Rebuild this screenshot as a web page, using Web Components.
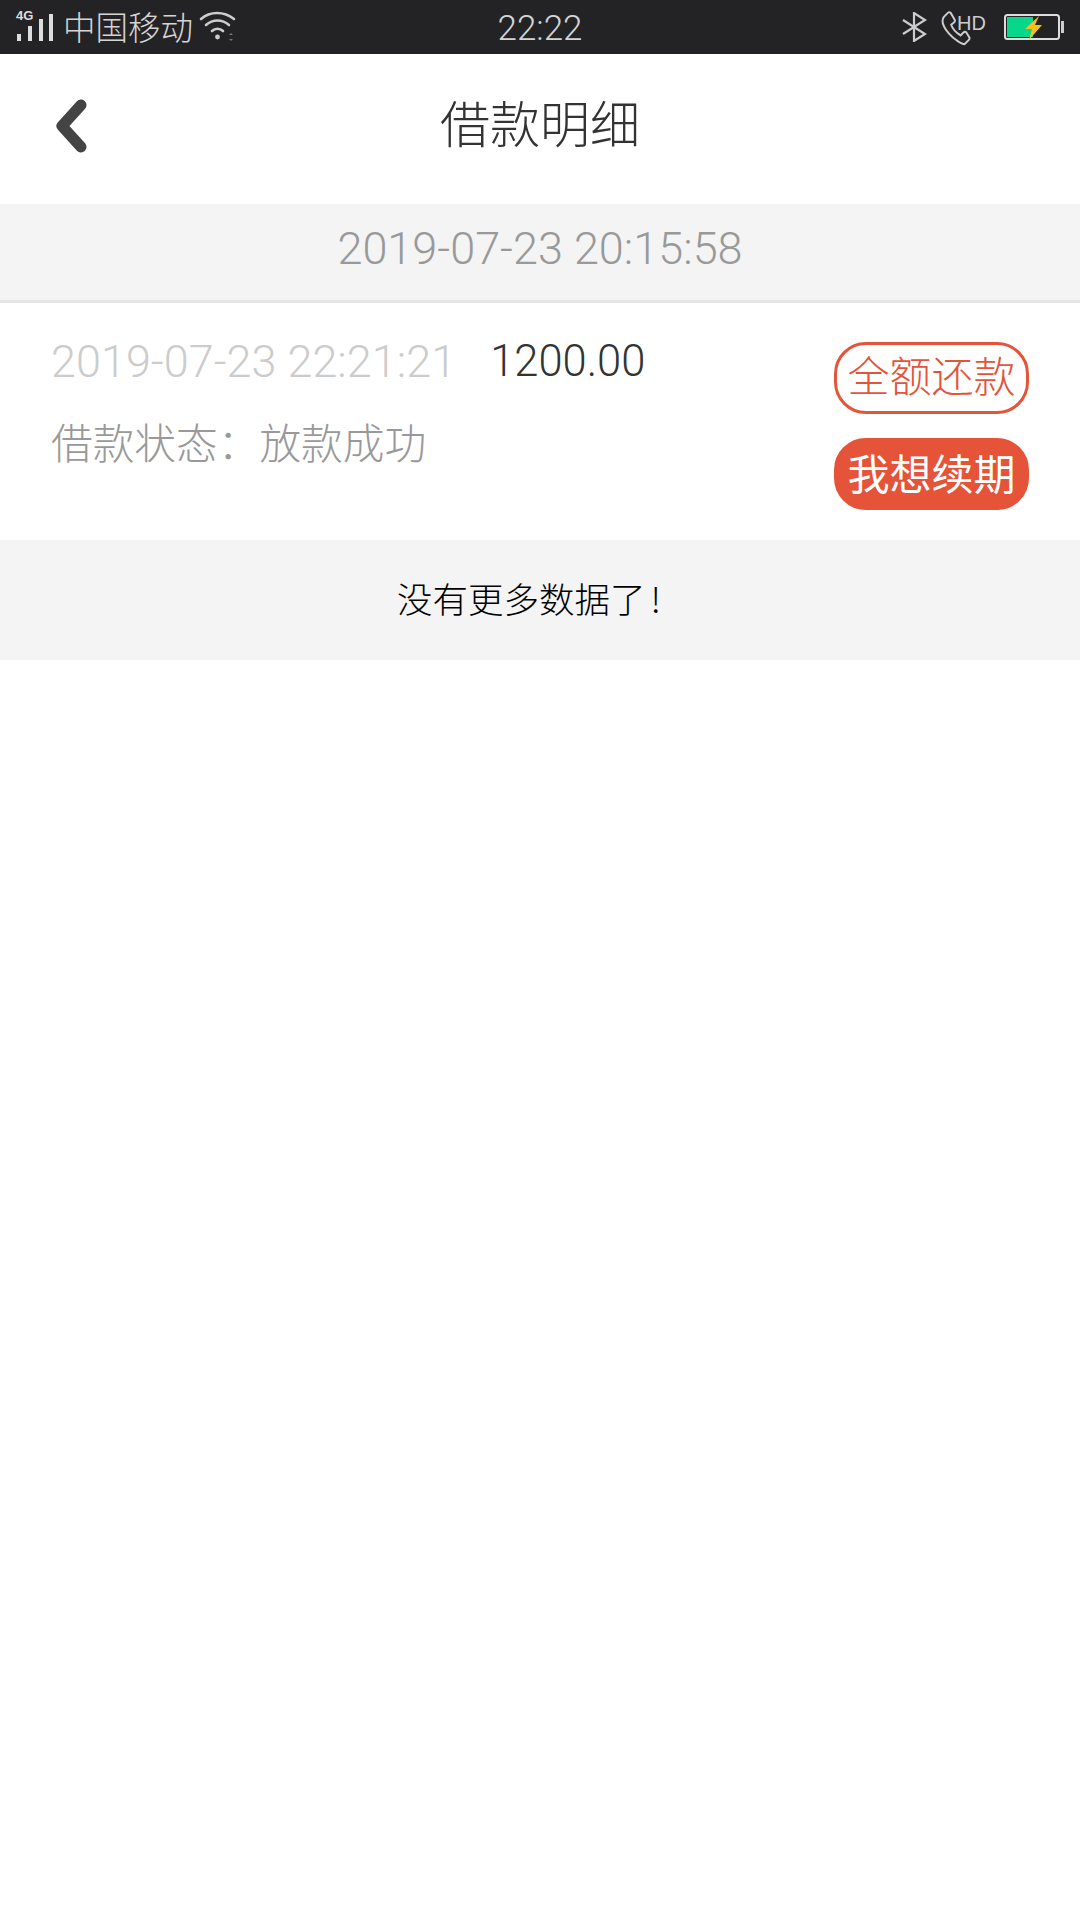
<!DOCTYPE html>
<html lang="zh">
<head>
<meta charset="utf-8">
<title>借款明细</title>
<style>
  html, body { margin: 0; background: #fff; }
  body { width: 1080px; height: 1920px; overflow: hidden; font-family: "Roboto", "Noto Sans CJK SC", sans-serif; }
</style>
</head>
<body>
<status-bar></status-bar>
<page-header>借款明细</page-header>
<date-band>2019-07-23 20:15:58</date-band>
<loan-item date="2019-07-23 22:21:21" amount="1200.00" status="借款状态：放款成功"></loan-item>
<list-end>没有更多数据了<span>!</span></list-end>

<script>
class StatusBar extends HTMLElement {
  constructor() {
    super();
    this.attachShadow({ mode: 'open' }).innerHTML = `
    <style>
      :host { display: grid; grid-template-columns: 1fr auto 1fr; align-items: center; height: 54px; background: #232325; color: #d4d4d4; font-family: "Roboto", "Noto Sans CJK SC", sans-serif; }
      .left, .right { display: flex; align-items: center; }
      .left { padding-left: 16px; }
      .right { justify-content: flex-end; padding-right: 16px; }
      .carrier { font-size: 32.500px; font-weight: 300; margin: 0 6px 0 9px; padding-top: 4px; line-height: 50px; }
      .time { font-size: 35px; font-weight: 300; padding-top: 4px; line-height: 50px; }
      svg { display: block; }
      .sig { position: relative; width: 38px; height: 40px; margin-bottom: 4px; }
      .sig b { position: absolute; left: 0; top: 3px; font: bold 13px "Liberation Sans", sans-serif; color: #ddd; }
      .call { position: relative; width: 44px; height: 40px; margin: 0 19px 0 14px; }
      .call b { position: absolute; left: 16px; top: 6px; font: 20px/1 "Liberation Sans", sans-serif; color: #ccc; }
    </style>
    <div class="left">
      <div class="sig">
        <b>4G</b>
        <svg width="38" height="40" viewBox="0 0 38 40" fill="#ddd">
          <rect x="1" y="29" width="4" height="7"/>
          <rect x="12" y="21" width="4" height="15"/>
          <rect x="23" y="14" width="4" height="22"/>
          <rect x="33" y="9" width="4" height="27"/>
        </svg>
      </div>
      <span class="carrier">中国移动</span>
      <svg width="38" height="34" viewBox="0 0 38 34" fill="none" stroke="#ccc" stroke-width="2.6" stroke-linecap="round">
        <path d="M2 9 C11 1 25 1 35 9"/>
        <path d="M7 15 C14 9 23 9 30 15"/>
        <path d="M13 21 C16 18 21 18 24 21"/>
        <circle cx="18.500" cy="27" r="2.400" fill="#ccc" stroke="none"/>
        <path d="M30 25 l2 -2 l2 2z M30 29 l2 2 l2 -2z" fill="#777" stroke="none"/>
      </svg>
    </div>
    <div class="time">22:22</div>
    <div class="right">
      <svg width="26" height="30" viewBox="0 0 26 30" fill="none" stroke="#ccc" stroke-width="2.200">
        <path d="M2 8 L24 22 L13 29 V1 L24 8 L2 22"/>
      </svg>
      <div class="call">
        <b>HD</b>
        <svg width="32" height="40" viewBox="0 0 32 40" fill="none" stroke="#ccc" stroke-width="2">
          <path d="M6 9 L10 5 C11 4 12 4 13 5 L17 12 C17.500 13 17.500 14 16 15 L13.500 17 C15 22 20 26 23 28 L26 25 C27 24 28 24 29 25 L32 30 C32.500 31 32 32 31 33 L27 37 C25 37 17 33 11 26 C6 20 3 13 6 9 Z" transform="translate(-3 1) scale(.98)"/>
        </svg>
      </div>
      <svg width="60" height="28" viewBox="0 0 60 28">
        <rect x="1" y="2" width="54" height="24" rx="2.500" fill="none" stroke="#ddd" stroke-width="2"/>
        <rect x="3" y="4" width="26" height="20" fill="#06d78a"/>
        <rect x="57" y="8" width="3" height="12" fill="#ccc"/>
        <path d="M35 3 L21 16 H28 L25 27 L38 12 H31 Z" fill="#f4c020"/>
      </svg>
    </div>`;
  }
}

class PageHeader extends HTMLElement {
  constructor() {
    super();
    this.attachShadow({ mode: 'open' }).innerHTML = `
    <style>
      :host { display: grid; grid-template-columns: 1fr auto 1fr; align-items: center; height: 150px; background: #fff; color: #333; font: 300 50px "Noto Sans CJK SC", sans-serif; }
      svg { display: block; margin: 0 0 9px 52px; }
      .title { padding-bottom: 16px; }
    </style>
    <svg width="44" height="60" viewBox="0 0 44 60" fill="none" stroke="#444" stroke-width="11" stroke-linecap="round" stroke-linejoin="round">
      <path d="M29 10 L10 31 L29 52"/>
    </svg>
    <div class="title"><slot></slot></div>
    <div></div>`;
  }
}

class DateBand extends HTMLElement {
  constructor() {
    super();
    this.attachShadow({ mode: 'open' }).innerHTML = `
    <style>
      :host { display: flex; justify-content: center; align-items: center; height: 99px; padding-bottom: 8px; box-sizing: border-box; background: #f4f4f4; border-bottom: 3px solid #e5e5e5; color: #999; font: 300 45px "Roboto", sans-serif; }
    </style>
    <slot></slot>`;
  }
}

class LoanItem extends HTMLElement {
  constructor() {
    super();
    this.attachShadow({ mode: 'open' }).innerHTML = `
    <style>
      :host { display: flex; justify-content: space-between; height: 237px; padding: 0 51px; box-sizing: border-box; background: #fff; font-family: "Roboto", "Noto Sans CJK SC", sans-serif; font-weight: 300; }
      .info { padding-top: 31px; }
      .top { display: flex; gap: 34px; font-size: 45px; line-height: 56px; }
      .date { color: #ccc; }
      .amount { color: #333; font-size: 43.500px; }
      .status { margin-top: 23px; font: 300 41.700px/56px "Noto Sans CJK SC", sans-serif; color: #999; }
      .actions { display: flex; flex-direction: column; gap: 24px; padding-top: 39px; }
      .btn { display: flex; align-items: center; justify-content: center; width: 195px; height: 72px; padding-bottom: 9px; box-sizing: border-box; border-radius: 32px; border: 3px solid #e55339; font: 300 42px "Noto Sans CJK SC", sans-serif; color: #e55339; }
      .btn.solid { padding-bottom: 6px; background: #e55339; color: #fff; font-weight: 400; }
    </style>
    <div class="info">
      <div class="top"><span class="date"></span><span class="amount"></span></div>
      <div class="status"></div>
    </div>
    <div class="actions">
      <div class="btn">全额还款</div>
      <div class="btn solid">我想续期</div>
    </div>`;
  }
  connectedCallback() {
    const s = this.shadowRoot;
    s.querySelector('.date').textContent = this.getAttribute('date');
    s.querySelector('.amount').textContent = this.getAttribute('amount');
    s.querySelector('.status').textContent = this.getAttribute('status');
  }
}

class ListEnd extends HTMLElement {
  constructor() {
    super();
    this.attachShadow({ mode: 'open' }).innerHTML = `
    <style>
      :host { display: flex; justify-content: center; align-items: center; height: 120px; padding: 0 22px 6px 0; box-sizing: border-box; background: #f4f4f4; color: #000; font: 300 35.500px "Noto Sans CJK SC", sans-serif; }
      ::slotted(span) { margin-left: 5px; }
    </style>
    <div><slot></slot></div>`;
  }
}

customElements.define('status-bar', StatusBar);
customElements.define('page-header', PageHeader);
customElements.define('date-band', DateBand);
customElements.define('loan-item', LoanItem);
customElements.define('list-end', ListEnd);
</script>
</body>
</html>
